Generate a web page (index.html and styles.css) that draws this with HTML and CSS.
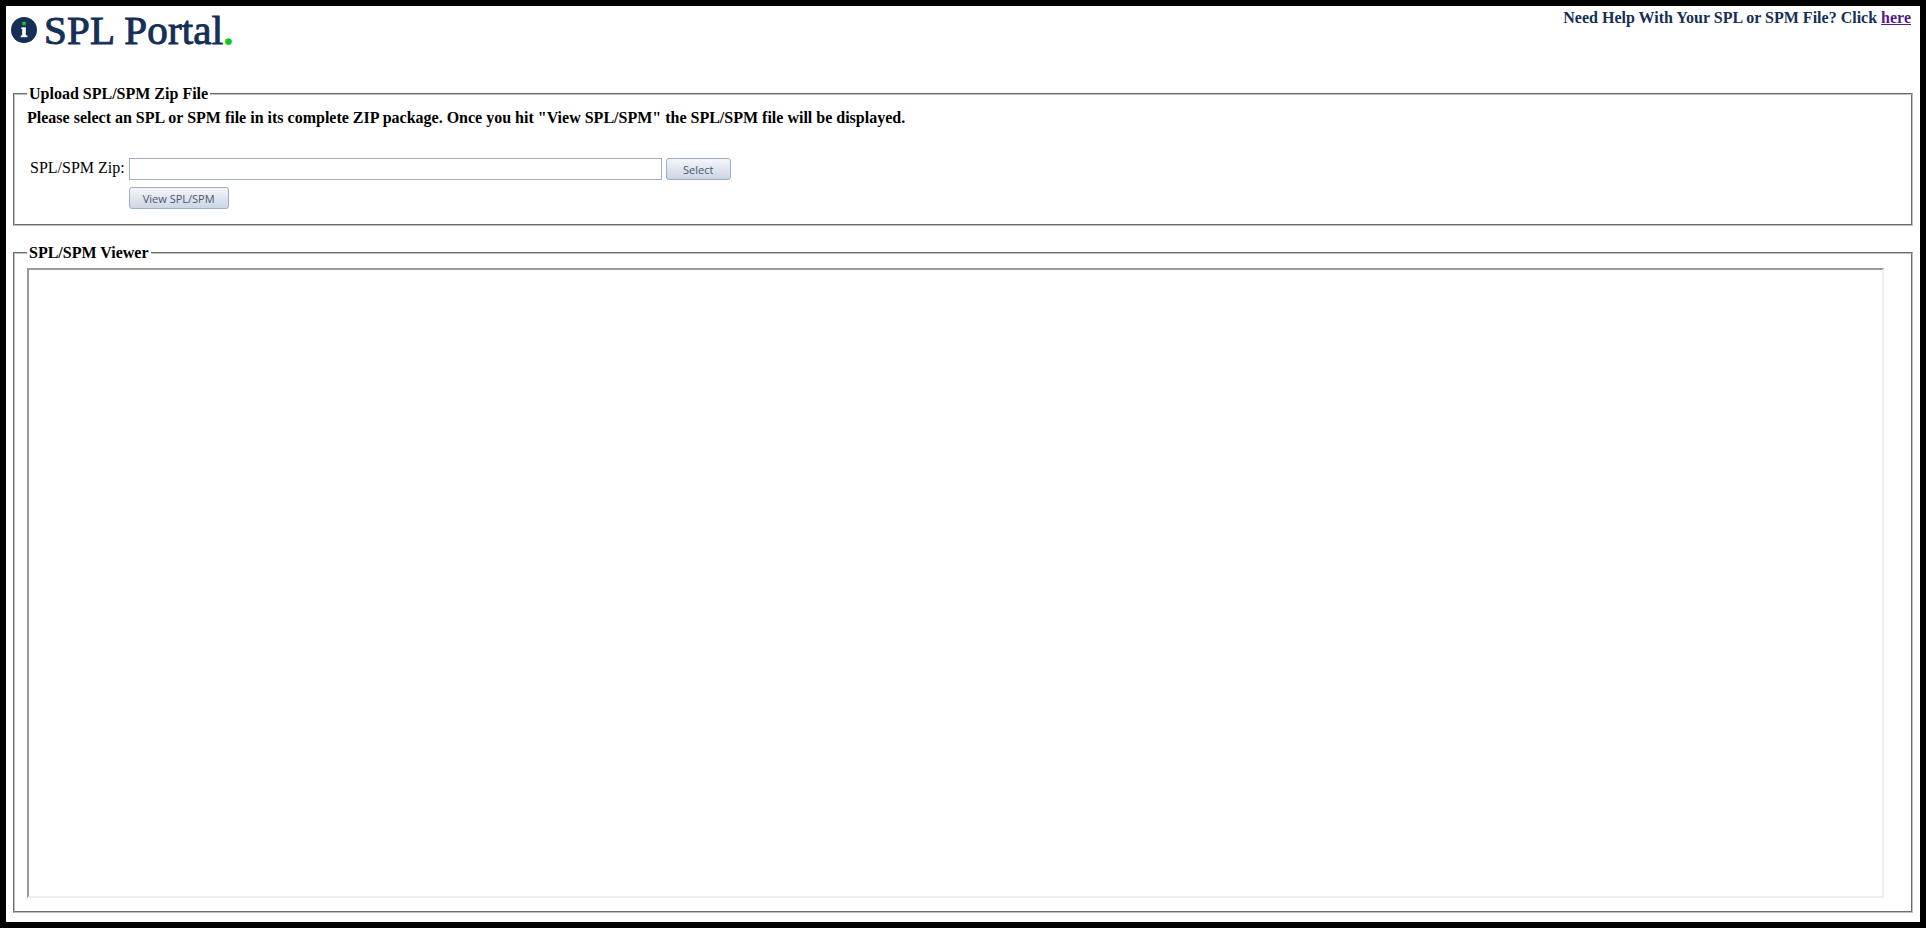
FILE: index.html
```html
<!DOCTYPE html>
<html lang="en">
<head>
<meta charset="utf-8">
<title>SPL Portal</title>
<link rel="stylesheet" href="styles.css">
</head>
<body>
<div class="page">
  <header class="header">
    <div class="brand">
      <svg class="brand-icon" width="26" height="26" viewBox="0 0 26 26" aria-hidden="true">
        <circle cx="13" cy="13" r="13" fill="#152f57"/>
        <circle cx="13" cy="6.5" r="2" fill="#1fc51f"/>
        <rect x="10.2" y="10.5" width="4.5" height="1.6" fill="#fff"/>
        <rect x="11.2" y="10.5" width="3.6" height="8.5" fill="#fff"/>
        <rect x="9.8" y="18.4" width="6.6" height="1.8" fill="#fff"/>
      </svg>
      <span class="brand-name">SPL Portal<span class="brand-dot">.</span></span>
    </div>
    <div class="help">Need Help With Your SPL or SPM File? Click <a class="help-link" href="#">here</a></div>
  </header>

  <fieldset class="group upload">
    <legend class="group-title">Upload SPL/SPM Zip File</legend>
    <p class="intro">Please select an SPL or SPM file in its complete ZIP package. Once you hit "View SPL/SPM" the SPL/SPM file will be displayed.</p>
    <div class="form">
      <label class="form-label" for="zip">SPL/SPM Zip:</label>
      <div class="form-fields">
        <div class="file-row">
          <input class="file-input" id="zip" type="text">
          <button class="btn btn-select" type="button">Select</button>
        </div>
        <button class="btn btn-view" type="button">View SPL/SPM</button>
      </div>
    </div>
  </fieldset>

  <fieldset class="group viewer">
    <legend class="group-title">SPL/SPM Viewer</legend>
    <div class="viewer-frame"></div>
  </fieldset>
</div>
</body>
</html>
```
FILE: styles.css
```css
* { box-sizing: border-box; }
html, body { height: 100%; margin: 0; }
body {
  background: #fff;
  color: #000;
  font-family: "Liberation Serif", "Times New Roman", serif;
  font-size: 16px;
}
.page {
  height: 928px;
  border: 6px solid #000;
  display: flex;
  flex-direction: column;
  padding: 0 7px 9px 7px;
  background: #fff;
}
.header {
  height: 79px;
  display: flex;
  justify-content: space-between;
  align-items: flex-start;
  margin: 0 0 0 -3px;
  flex: none;
}
.brand { display: flex; align-items: flex-start; padding: 5px 0 0 1px; }
.brand-icon { margin: 6px 7px 0 0; flex: none; }
.brand-name {
  font-size: 41px;
  line-height: 38px;
  letter-spacing: 0.2px;
  color: #152f57;
  -webkit-text-stroke: 1px #152f57;
}
.brand-dot { color: #17c517; -webkit-text-stroke: 2px #17c517; }
.help {
  font-weight: bold;
  color: #152f57;
  padding: 3px 2px 0 0;
  line-height: 18px;
}
.help-link { color: #551a8b; }
.group {
  margin: 0;
  border: 2px groove #c0c0c0;
  padding: 0 0 0 12px;
  min-width: 0;
}
.group-title {
  font-weight: bold;
  padding: 0 2px;
  margin-left: 0;
  line-height: 18px;
}
.upload { height: 141px; flex: none; }
.intro { margin: 6px 0 0; font-weight: bold; line-height: 18px; }
.form { display: flex; margin-top: 31px; padding-left: 3px; }
.form-label { line-height: 18px; margin: 1px 4px 0 0; white-space: nowrap; }
.form-fields { display: flex; flex-direction: column; align-items: flex-start; gap: 7px; }
.file-row { display: flex; gap: 4px; }
.file-input {
  width: 533px;
  height: 22px;
  border: 1px solid #9eadc6;
  background: #fff;
  padding: 0 4px;
  margin: 0;
}
.btn {
  height: 22px;
  border: 1px solid #9aadcb;
  border-radius: 3px;
  background: linear-gradient(#f4f6fa, #ccd5e4);
  color: #4a5670;
  font-family: "Open Sans", sans-serif;
  font-size: 11px;
  padding: 0;
  margin: 0;
}
.btn-select { width: 65px; }
.btn-view { width: 100px; }
.viewer { flex: 1; margin-top: 18px; min-height: 0; padding-bottom: 12px; display: flex; }
.viewer-frame {
  height: 630px;
  width: 1857px;
  margin-top: 6px;
  border: 2px solid;
  border-color: #9a9a9a #eeeeee #eeeeee #9a9a9a;
  background: #fff;
}
```
